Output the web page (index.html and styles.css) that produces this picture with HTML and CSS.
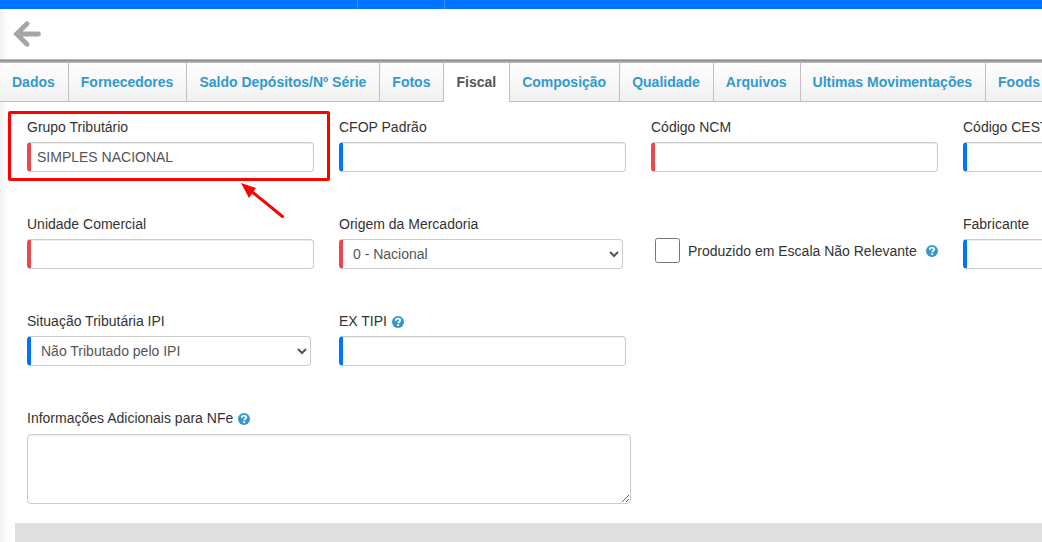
FILE: index.html
```html
<!DOCTYPE html>
<html lang="pt-BR">
<head>
<meta charset="utf-8">
<title>Produto - Fiscal</title>
<link rel="stylesheet" href="styles.css">
</head>
<body>
<svg class="defs" aria-hidden="true">
  <symbol id="help" viewBox="0 0 12 12">
    <circle cx="6" cy="6" r="6" fill="#3399cc"/>
    <path d="M3.800 4.700C3.900 3.300 4.900 2.700 6 2.700s2.200.6 2.200 1.800C8.200 5.800 6.200 5.700 6.200 7.300" fill="none" stroke="#fff" stroke-width="1.800"/>
    <rect x="5.200" y="8.200" width="1.900" height="1.800" fill="#fff"/>
  </symbol>
</svg>
<div class="topbar"><span class="topbar-item topbar-first"></span><span class="topbar-item"></span></div>
<header class="toolbar">
  <button class="back" type="button" aria-label="Voltar">
    <svg viewBox="0 0 28 26" width="28" height="26"><path d="M14 2.800 3.600 13 14 23.200M4 13h21.500" fill="none" stroke="#a6a6a6" stroke-width="4.800" stroke-linecap="round" stroke-linejoin="miter"/></svg>
  </button>
</header>
<nav class="tabs">
  <a class="tab" href="#dados">Dados</a>
  <a class="tab" href="#fornecedores">Fornecedores</a>
  <a class="tab" href="#saldo">Saldo Depósitos/Nº Série</a>
  <a class="tab" href="#fotos">Fotos</a>
  <a class="tab active" href="#fiscal" aria-current="page">Fiscal</a>
  <a class="tab" href="#composicao">Composição</a>
  <a class="tab" href="#qualidade">Qualidade</a>
  <a class="tab" href="#arquivos">Arquivos</a>
  <a class="tab" href="#movimentacoes">Ultimas Movimentações</a>
  <a class="tab" href="#foods">Foods</a>
</nav>
<main class="panel">
  <form class="fields">
    <div class="field marked">
      <label for="grupo">Grupo Tributário</label>
      <input class="control required" id="grupo" type="text" value="SIMPLES NACIONAL">
      <svg class="pointer" viewBox="0 0 46 38" width="46" height="38" aria-hidden="true"><path d="M10 8 41.500 33.500" stroke="#f00" stroke-width="3" stroke-linecap="round"/><path d="M0 0 15 5 8 15Z" fill="#f00"/></svg>
    </div>
    <div class="field">
      <label for="cfop">CFOP Padrão</label>
      <input class="control" id="cfop" type="text">
    </div>
    <div class="field">
      <label for="ncm">Código NCM</label>
      <input class="control required" id="ncm" type="text">
    </div>
    <div class="field">
      <label for="cest">Código CEST</label>
      <input class="control" id="cest" type="text">
    </div>
    <div class="field">
      <label for="unidade">Unidade Comercial</label>
      <input class="control required" id="unidade" type="text">
    </div>
    <div class="field">
      <label for="origem">Origem da Mercadoria</label>
      <select class="control required" id="origem"><option>0 - Nacional</option></select>
    </div>
    <div class="field check">
      <input id="escala" type="checkbox">
      <label for="escala">Produzido em Escala Não Relevante</label>
      <svg class="help" role="img" aria-label="Ajuda"><use href="#help"/></svg>
    </div>
    <div class="field">
      <label for="fabricante">Fabricante</label>
      <input class="control" id="fabricante" type="text">
    </div>
    <div class="field">
      <label for="ipi">Situação Tributária IPI</label>
      <select class="control" id="ipi"><option>Não Tributado pelo IPI</option></select>
    </div>
    <div class="field">
      <label for="tipi">EX TIPI <svg class="help" role="img" aria-label="Ajuda"><use href="#help"/></svg></label>
      <input class="control" id="tipi" type="text">
    </div>
    <div class="field wide">
      <label for="info">Informações Adicionais para NFe <svg class="help" role="img" aria-label="Ajuda"><use href="#help"/></svg></label>
      <textarea class="notes" id="info"></textarea>
    </div>
  </form>
  <div class="section-bar"></div>
</main>
</body>
</html>
```
FILE: styles.css
```css
* { box-sizing: border-box; }
body {
  margin: 0;
  min-height: 100vh;
  overflow: hidden;
  background: #fff linear-gradient(to right, #f1f1f1, #fff) no-repeat 0 0 / 8px 100%;
  color: #333;
  font: 14px/20px "Liberation Sans", Arial, sans-serif;
}
.defs { position: absolute; width: 0; height: 0; }
.topbar { display: flex; height: 9px; background: #0074ff; }
.topbar-item { width: 87px; border-right: 1px solid #3391ff; }
.topbar-first { width: 358px; }
.toolbar {
  display: flex;
  align-items: center;
  height: 51px;
  padding: 0 13px;
  border-bottom: 1px solid #b8b8b8;
}
.back { display: flex; padding: 0; border: 0; background: none; }
.tabs {
  display: flex;
  overflow: hidden;
  height: 42px;
  padding-top: 3px;
  background:
    linear-gradient(#8f8f8f 1px, #a4a4a4 1px, #a4a4a4 2px, #b8b8b8 2px) no-repeat 0 0 / 100% 3px,
    linear-gradient(#fff, #f0f0f0);
  box-shadow: inset 0 -1px #c0c0c0;
}
.tab {
  flex: none;
  padding: 9px 13px 10px 12px;
  border-right: 1px solid #c0c0c0;
  color: #3399cc;
  font-weight: bold;
  text-decoration: none;
}
.active { background: #fff; color: #555; }
.fields {
  display: grid;
  grid-template-columns: repeat(4, 287px);
  gap: 42px 25px;
  padding: 15px 27px 19px;
}
.field { position: relative; display: flex; flex-direction: column; gap: 5px; }
.control {
  width: 100%;
  height: 30px;
  padding: 4px 6px;
  border: 1px solid #ccc;
  border-left: 4px solid #0074ff;
  border-radius: 4px;
  background: #fff;
  box-shadow: inset 0 1px 1px rgba(0, 0, 0, .075);
  color: #555;
  font: inherit;
}
.required { border-left-color: #e9484d; }
select.control { width: 284px; box-shadow: none; }
.marked::before {
  content: "";
  position: absolute;
  inset: -6px -16px -9px -19px;
  border: 3px solid #f00;
  border-radius: 2px;
  pointer-events: none;
}
.pointer { position: absolute; left: 214px; top: 66px; }
.check { flex-direction: row; align-items: center; gap: 8px; padding: 18px 0 0 4px; }
.check input { width: 25px; height: 25px; margin: 0; }
.help { width: 12px; height: 12px; vertical-align: -2px; margin-left: 1px; }
.wide { grid-column: 1 / -1; gap: 6px; }
.notes {
  width: 604px;
  height: 70px;
  border: 1px solid #ccc;
  border-radius: 4px;
  background: #fff;
  box-shadow: inset 0 1px 1px rgba(0, 0, 0, .075);
  font: inherit;
}
.section-bar { height: 19px; margin-left: 15px; background: #dfdfdf; }
```
